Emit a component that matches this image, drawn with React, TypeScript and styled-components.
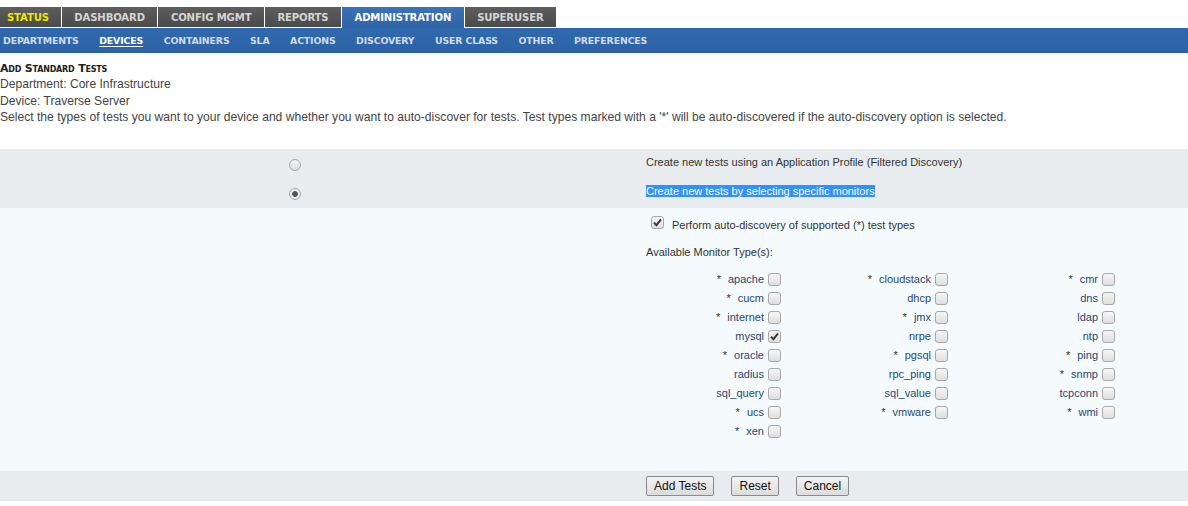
import React, { FC, useState } from "react";
import styled, { createGlobalStyle } from "styled-components";

const GlobalStyle = createGlobalStyle`
  html, body {
    margin: 0;
    padding: 0;
    background: #fff;
  }
  body {
    font-family: "Liberation Sans", Arial, sans-serif;
    font-size: 12px;
    color: #333;
  }
`;

interface Monitor {
  name: string;
  auto: boolean;
}

const monitors: Monitor[] = [
  { name: "apache", auto: true },
  { name: "cloudstack", auto: true },
  { name: "cmr", auto: true },
  { name: "cucm", auto: true },
  { name: "dhcp", auto: false },
  { name: "dns", auto: false },
  { name: "internet", auto: true },
  { name: "jmx", auto: true },
  { name: "ldap", auto: false },
  { name: "mysql", auto: false },
  { name: "nrpe", auto: false },
  { name: "ntp", auto: false },
  { name: "oracle", auto: true },
  { name: "pgsql", auto: true },
  { name: "ping", auto: true },
  { name: "radius", auto: false },
  { name: "rpc_ping", auto: false },
  { name: "snmp", auto: true },
  { name: "sql_query", auto: false },
  { name: "sql_value", auto: false },
  { name: "tcpconn", auto: false },
  { name: "ucs", auto: true },
  { name: "vmware", auto: true },
  { name: "wmi", auto: true },
  { name: "xen", auto: true },
];

const topTabs = ["STATUS", "DASHBOARD", "CONFIG MGMT", "REPORTS", "ADMINISTRATION", "SUPERUSER"];
const subTabs = ["DEPARTMENTS", "DEVICES", "CONTAINERS", "SLA", "ACTIONS", "DISCOVERY", "USER CLASS", "OTHER", "PREFERENCES"];

const Tick: FC = () => (
  <svg width="9" height="9" viewBox="0 0 9 9">
    <path d="M1 4.6 L3.4 7.2 L8 1.4" fill="none" stroke="#333" strokeWidth="1.9" />
  </svg>
);

const App: FC = () => {
  const [checked, setChecked] = useState<Record<string, boolean>>({ mysql: true });
  const [mode, setMode] = useState(1);
  const [autoDiscover, setAutoDiscover] = useState(true);

  return (
    <>
      <GlobalStyle />
      <TopBar>
        {topTabs.map((t) => (
          <TopTab key={t} $active={t === "ADMINISTRATION"} $status={t === "STATUS"}>
            {t}
          </TopTab>
        ))}
      </TopBar>
      <SubBar>
        {subTabs.map((t) => (
          <SubTab key={t} $active={t === "DEVICES"}>
            {t}
          </SubTab>
        ))}
      </SubBar>

      <Header>
        <Title>Add Standard Tests</Title>
        <Line>Department: Core Infrastructure</Line>
        <Line>Device: Traverse Server</Line>
        <Line>
          Select the types of tests you want to your device and whether you want to auto-discover for tests. Test
          types marked with a '*' will be auto-discovered if the auto-discovery option is selected.
        </Line>
      </Header>

      <ModePanel>
        <ModeRow onClick={() => setMode(0)}>
          <RadioCell>
            <Radio $on={mode === 0} />
          </RadioCell>
          <ModeText>Create new tests using an Application Profile (Filtered Discovery)</ModeText>
        </ModeRow>
        <ModeRow onClick={() => setMode(1)}>
          <RadioCell>
            <Radio $on={mode === 1} />
          </RadioCell>
          <ModeText>
            <Selected>Create new tests by selecting specific monitors</Selected>
          </ModeText>
        </ModeRow>
      </ModePanel>

      <MonitorPanel>
        <Spacer />
        <MonitorBody>
          <AutoRow onClick={() => setAutoDiscover(!autoDiscover)}>
            <Box>{autoDiscover && <Tick />}</Box>
            <span>Perform auto-discovery of supported (*) test types</span>
          </AutoRow>
          <Available>Available Monitor Type(s):</Available>
          <MonitorGrid>
            {monitors.map((m) => (
              <MonitorItem
                key={m.name}
                onClick={() => setChecked({ ...checked, [m.name]: !checked[m.name] })}
              >
                {m.auto && <Star>*</Star>}
                {m.name}
                <Box>{checked[m.name] && <Tick />}</Box>
              </MonitorItem>
            ))}
          </MonitorGrid>
        </MonitorBody>
      </MonitorPanel>

      <ButtonBar>
        <Spacer />
        <Buttons>
          <Button>Add Tests</Button>
          <Button>Reset</Button>
          <Button>Cancel</Button>
        </Buttons>
      </ButtonBar>
    </>
  );
};

export default App;

const TopBar = styled.div`
  display: flex;
  padding-top: 7px;
  height: 20px;
  border-bottom: 1px solid #fff;
`;

const TopTab = styled.div<{ $active?: boolean; $status?: boolean }>`
  height: 20px;
  line-height: 21px;
  padding: 0 12.5px;
  margin-right: 1px;
  font-family: "DejaVu Sans", Verdana, sans-serif;
  font-weight: bold;
  font-size: 10.1px;
  letter-spacing: -0.15px;
  color: ${(p) => (p.$status ? "#f2e500" : p.$active ? "#fff" : "#d4d4d4")};
  background: ${(p) =>
    p.$active
      ? "linear-gradient(#3a72b8, #2f64a6)"
      : "linear-gradient(#5e5e5e, #4a4a4a)"};
  ${(p) => p.$active && "height: 21px; margin-bottom: -1px; position: relative; z-index: 1;"}
  &:first-child {
    padding: 0 12px 0 7px;
  }
`;

const SubBar = styled.div`
  display: flex;
  align-items: center;
  height: 25px;
  padding-left: 3px;
  gap: 20.5px;
  background: linear-gradient(#3169ae, #2c62a5);
`;

const SubTab = styled.span<{ $active?: boolean }>`
  font-family: "DejaVu Sans", Verdana, sans-serif;
  font-weight: bold;
  font-size: 9.4px;
  letter-spacing: -0.15px;
  color: ${(p) => (p.$active ? "#fff" : "#cfdcec")};
  text-decoration: ${(p) => (p.$active ? "underline" : "none")};
  text-underline-offset: 2px;
`;

const Header = styled.div`
  padding-top: 8px;
  margin-bottom: 23px;
`;

const Title = styled.div`
  font-family: "DejaVu Sans", Verdana, sans-serif;
  font-weight: bold;
  font-variant: small-caps;
  font-size: 11px;
  letter-spacing: -0.2px;
  color: #222;
  line-height: 15px;
`;

const Line = styled.div`
  font-size: 12.1px;
  line-height: 16.5px;
  color: #444;
`;

const ModePanel = styled.div`
  background: #e8ecee;
  padding: 0.5px 0;
`;

const ModeRow = styled.div`
  display: grid;
  grid-template-columns: 590px 1fr;
  align-items: center;
  height: 29px;
  cursor: pointer;
`;

const RadioCell = styled.div`
  display: flex;
  justify-content: center;
  padding-top: 2px;
`;

const Radio = styled.span<{ $on?: boolean }>`
  width: 10px;
  height: 10px;
  border-radius: 50%;
  border: 1px solid #a6a6a6;
  background: ${(p) =>
    p.$on
      ? "radial-gradient(circle, #555 0 2.5px, #eee 3.2px)"
      : "linear-gradient(#f4f4f4, #dcdcdc)"};
`;

const ModeText = styled.div`
  padding-left: 56px;
  padding-bottom: 4px;
  font-size: 11px;
  color: #333;
`;

const Selected = styled.span`
  background: #3390ff;
  color: #fff;
`;

const MonitorPanel = styled.div`
  display: grid;
  grid-template-columns: 590px 1fr;
  background: #f5fafc;
  height: 263px;
`;

const Spacer = styled.div``;

const MonitorBody = styled.div`
  padding-top: 7px;
  font-size: 11px;
  color: #333;
`;

const AutoRow = styled.div`
  display: flex;
  align-items: center;
  gap: 8px;
  padding-left: 61px;
  height: 16px;
  cursor: pointer;
  span:last-child {
    padding-top: 4px;
  }
`;

const Available = styled.div`
  padding-left: 56px;
  margin-top: 14px;
  line-height: 14px;
`;

const MonitorGrid = styled.div`
  display: grid;
  grid-template-columns: repeat(3, 167px);
  grid-auto-rows: 19px;
  padding-left: 24px;
  margin-top: 11px;
`;

const MonitorItem = styled.div`
  display: flex;
  justify-content: flex-end;
  align-items: center;
  gap: 4px;
  font-size: 11px;
  color: #2b4770;
  cursor: pointer;
`;

const Star = styled.span`
  margin-right: 3px;
  color: #333;
`;

const Box = styled.span`
  width: 11px;
  height: 11px;
  flex: none;
  border: 1px solid #a8a8a8;
  border-radius: 3px;
  background: linear-gradient(#f6f6f6, #dedede);
  display: flex;
  align-items: center;
  justify-content: center;
`;

const ButtonBar = styled.div`
  display: grid;
  grid-template-columns: 646px 1fr;
  background: #e8ecee;
  height: 30px;
  align-items: center;
`;

const Buttons = styled.div`
  display: flex;
  gap: 17px;
`;

const Button = styled.button`
  height: 20px;
  padding: 0 7px;
  font-family: "Liberation Sans", Arial, sans-serif;
  font-size: 12px;
  color: #111;
  border: 1px solid #8a8a8a;
  border-radius: 2px;
  background: linear-gradient(#f3f3f3, #dcdcdc);
  cursor: pointer;
`;
